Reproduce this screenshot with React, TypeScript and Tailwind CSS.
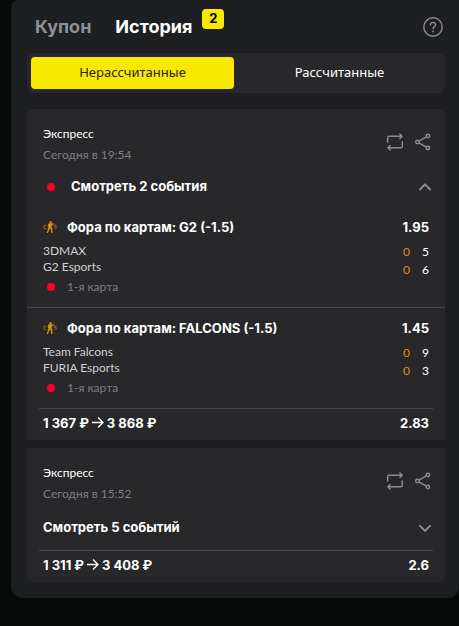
import { useState } from "react";

type Market = {
  title: string;
  odds: string;
  teams: string[];
  scores: [string, string][];
  stage: string;
};

type Bet = {
  id: string;
  date: string;
  toggle: string;
  live?: boolean;
  markets: Market[];
  stake: string;
  payout: string;
  odds: string;
};

const BETS: Bet[] = [
  {
    id: "1",
    date: "Сегодня в 19:54",
    toggle: "Смотреть 2 события",
    live: true,
    markets: [
      {
        title: "Фора по картам: G2 (-1.5)",
        odds: "1.95",
        teams: ["3DMAX", "G2 Esports"],
        scores: [["0", "5"], ["0", "6"]],
        stage: "1-я карта",
      },
      {
        title: "Фора по картам: FALCONS (-1.5)",
        odds: "1.45",
        teams: ["Team Falcons", "FURIA Esports"],
        scores: [["0", "9"], ["0", "3"]],
        stage: "1-я карта",
      },
    ],
    stake: "1 367 ₽",
    payout: "3 868 ₽",
    odds: "2.83",
  },
  {
    id: "2",
    date: "Сегодня в 15:52",
    toggle: "Смотреть 5 событий",
    markets: [],
    stake: "1 311 ₽",
    payout: "3 408 ₽",
    odds: "2.6",
  },
];

function HelpIcon() {
  return (
    <svg width="20" height="20" viewBox="0 0 20 20" fill="none" stroke="currentColor" strokeWidth="1.4" strokeLinecap="round">
      <circle cx="10" cy="10" r="9.2" />
      <path d="M7.4 7.9c0-1.5 1.1-2.5 2.6-2.5s2.6 1 2.6 2.3c0 1.9-2.5 2-2.5 4" />
      <path d="M10.1 14.4v.3" strokeWidth="1.7" />
    </svg>
  );
}

function RepeatIcon() {
  return (
    <svg width="18" height="18" viewBox="0 0 18 18" fill="none" stroke="currentColor" strokeWidth="1.5" strokeLinecap="round" strokeLinejoin="round">
      <path d="M1.7 9V4.8c0-1 .5-1.5 1.5-1.5h12.1M13.9 1.1l2.2 2.2-2.2 2.2" />
      <path d="M16.3 9v4.2c0 1-.5 1.5-1.5 1.5H2.7M4.1 12.5l-2.2 2.2 2.2 2.2" />
    </svg>
  );
}

function ShareIcon() {
  return (
    <svg width="18" height="18" viewBox="0 0 18 18" fill="none" stroke="currentColor" strokeWidth="1.5">
      <circle cx="3.4" cy="9" r="1.7" />
      <circle cx="13.9" cy="3" r="1.7" />
      <circle cx="13.9" cy="15" r="1.7" />
      <path d="M4.9 8.1l7.5-4.2M4.9 9.9l7.5 4.2" />
    </svg>
  );
}

function Chevron({ up }: { up: boolean }) {
  return (
    <svg width="14" height="14" viewBox="0 0 14 14" fill="none" stroke="currentColor" strokeWidth="1.9">
      <path d={up ? "M1.4 10L7 4.4l5.6 5.6" : "M1.4 4.4L7 10l5.6-5.6"} />
    </svg>
  );
}

function Arrow() {
  return (
    <svg width="12" height="13" viewBox="0 0 12 13" fill="none" stroke="currentColor" strokeWidth="1.3">
      <path d="M0 5.5h11M6 .5l5 5-5 5" />
    </svg>
  );
}

function CsIcon() {
  return (
    <svg width="14" height="14" viewBox="0 0 14 14" fill="none" stroke="#8f611c" strokeWidth="1.1" aria-hidden="true">
      <path d="M3.3 5.5A1.7 1.7 0 1 0 3.3 8.5" />
      <path d="M13.4 5.4c-.9-.6-2.3-.4-2.2.4.1.9 2.3.7 2.2 1.7 0 .9-1.4 1-2.3.4" />
      <g fill="#de8f10" stroke="none">
        <circle cx="7.6" cy="2.1" r="1.2" />
        <path d="M5.3 3.6l2.6-.5 1.2.5 2-.2v.8L9 4.9l-.4 2.3.8 1.9.1 3.9H8.2L8 9.8 6.9 8.4 6 10.5 4.9 13H3.7l1.1-3.6.7-2.2-.8-.8z" />
      </g>
    </svg>
  );
}

function LiveDot() {
  return <span className="mx-1 size-2 shrink-0 rounded-full bg-[#ff0022]" />;
}

function MarketRow({ market }: { market: Market }) {
  return (
    <li className="border-b border-[#464648] px-4 pt-2.5 pb-3 last:border-b-0">
      <div className="flex items-center font-[Inter,sans-serif] text-[13px] leading-5 font-bold text-white">
        <CsIcon />
        <h3 className="ml-2.5 flex-1">{market.title}</h3>
        <span>{market.odds}</span>
      </div>
      <div className="mt-1.5 flex justify-between text-xs">
        <div className="leading-4 text-[#cfcfd1]">
          {market.teams.map((team) => (
            <p key={team}>{team}</p>
          ))}
          <p className="mt-1 flex items-center gap-2 text-[#7d7e82]">
            <LiveDot />
            {market.stage}
          </p>
        </div>
        <div className="leading-[18px] text-white">
          {market.scores.map(([maps, rounds], i) => (
            <p key={i} className="flex gap-3">
              <span className="text-[#e08a14]">{maps}</span>
              <span>{rounds}</span>
            </p>
          ))}
        </div>
      </div>
    </li>
  );
}

function BetCard({ bet }: { bet: Bet }) {
  const [open, setOpen] = useState(bet.markets.length > 0);

  return (
    <article className="bg-[#28282a] first:rounded-t-lg last:rounded-b-lg">
      <header className="flex justify-between pt-4 pr-[13px] pb-0.5 pl-4">
        <div className="text-xs">
          <h2 className="leading-[18px] text-white">Экспресс</h2>
          <p className="mt-0.5 leading-5 text-[#7d7e82]">{bet.date}</p>
        </div>
        <div className="flex h-[34px] items-center gap-2.5 text-[#8b8b90]">
          <button type="button" aria-label="Повторить">
            <RepeatIcon />
          </button>
          <button type="button" aria-label="Поделиться">
            <ShareIcon />
          </button>
        </div>
      </header>

      <button
        type="button"
        aria-expanded={open}
        onClick={() => setOpen((v) => !v)}
        className={
          "flex w-full items-center gap-3 pr-[13px] pl-4 font-[Inter,sans-serif] text-[13px] font-bold text-white " +
          (open ? "h-10" : "h-11")
        }
      >
        {bet.live && <LiveDot />}
        <span className="flex-1 text-left">{bet.toggle}</span>
        <span className="text-[#8b8b90]">
          <Chevron up={open} />
        </span>
      </button>

      {open && (
        <ul>
          {bet.markets.map((market) => (
            <MarketRow key={market.title} market={market} />
          ))}
        </ul>
      )}

      <footer className="mx-3 flex items-center justify-between border-t border-[#464648] px-1 pt-1 pb-[7px] font-[Inter,sans-serif] text-[13px] leading-5 font-bold text-white">
        <span className="flex items-center gap-[3px]">
          {bet.stake}
          <Arrow />
          {bet.payout}
        </span>
        <span>{bet.odds}</span>
      </footer>
    </article>
  );
}

export default function App() {
  const [settled, setSettled] = useState(false);

  return (
    <div className="min-h-screen bg-[#080a09] pl-[11px] font-[Lato,sans-serif]">
      <main className="rounded-tl-lg rounded-b-xl bg-[#1e1f21] pr-3.5 pb-4 pl-4">
        <div className="flex h-[53px] items-center pl-2 font-[Inter,sans-serif] text-lg font-bold">
          <button type="button" className="text-[#8f9097]">
            Купон
          </button>
          <button type="button" className="ml-6 text-white">
            История
          </button>
          <span className="mb-4 ml-2.5 flex h-5 w-[22px] items-center justify-center rounded bg-[#f9e800] text-[13px] text-black">
            2
          </span>
          <button type="button" aria-label="Помощь" className="mr-0.5 ml-auto text-[#8b8b90]">
            <HelpIcon />
          </button>
        </div>

        <div role="tablist" className="flex h-10 gap-1 rounded-lg bg-[#28282a] p-1 font-['Noto_Sans',sans-serif] text-[13px]">
          <button
            type="button"
            role="tab"
            aria-selected={!settled}
            onClick={() => setSettled(false)}
            className={"flex-1 rounded " + (settled ? "text-white" : "bg-[#f9e800] text-[#1e1f21]")}
          >
            Нерассчитанные
          </button>
          <button
            type="button"
            role="tab"
            aria-selected={settled}
            onClick={() => setSettled(true)}
            className={"flex-1 rounded " + (settled ? "bg-[#f9e800] text-[#1e1f21]" : "text-white")}
          >
            Рассчитанные
          </button>
        </div>

        <section className="mt-4 flex flex-col gap-2">
          {BETS.map((bet) => (
            <BetCard key={bet.id} bet={bet} />
          ))}
        </section>
      </main>
    </div>
  );
}
